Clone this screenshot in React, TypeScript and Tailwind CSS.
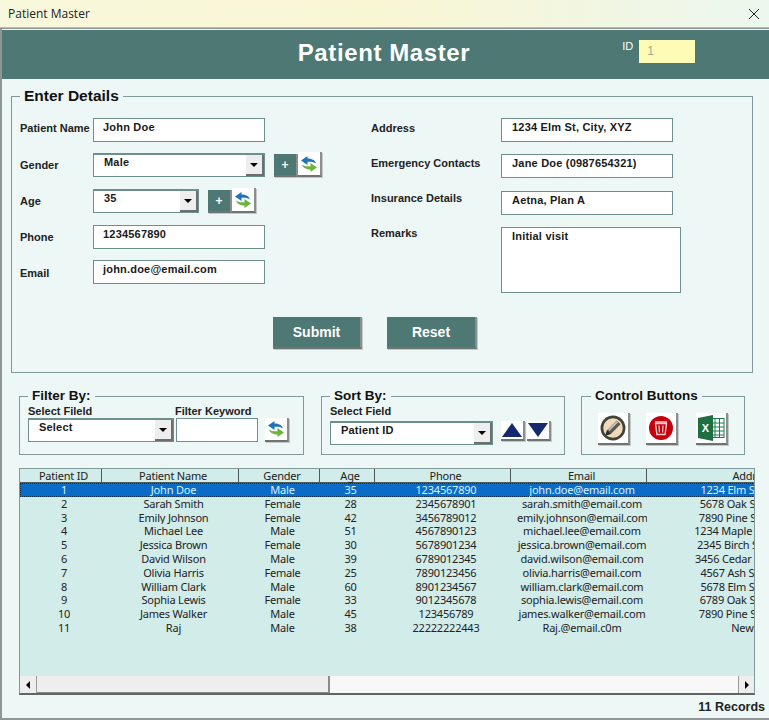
import React from "react";

const patients = [
  ["1", "John Doe", "Male", "35", "1234567890", "john.doe@email.com", "1234 Elm St, City, XYZ"],
  ["2", "Sarah Smith", "Female", "28", "2345678901", "sarah.smith@email.com", "5678 Oak St, City, XYZ"],
  ["3", "Emily Johnson", "Female", "42", "3456789012", "emily.johnson@email.com", "7890 Pine St, City, XYZ"],
  ["4", "Michael Lee", "Male", "51", "4567890123", "michael.lee@email.com", "1234 Maple St, City, XYZ"],
  ["5", "Jessica Brown", "Female", "30", "5678901234", "jessica.brown@email.com", "2345 Birch St, City, XYZ"],
  ["6", "David Wilson", "Male", "39", "6789012345", "david.wilson@email.com", "3456 Cedar St, City, XYZ"],
  ["7", "Olivia Harris", "Female", "25", "7890123456", "olivia.harris@email.com", "4567 Ash St, City, XYZ"],
  ["8", "William Clark", "Male", "60", "8901234567", "william.clark@email.com", "5678 Elm St, City, XYZ"],
  ["9", "Sophia Lewis", "Female", "33", "9012345678", "sophia.lewis@email.com", "6789 Oak St, City, XYZ"],
  ["10", "James Walker", "Male", "45", "123456789", "james.walker@email.com", "7890 Pine St, City, XYZ"],
  ["11", "Raj", "Male", "38", "22222222443", "Raj.@email.c0m", "New City"],
];

const columns = [
  { name: "Patient ID", width: "w-[82px]" },
  { name: "Patient Name", width: "w-[137px]" },
  { name: "Gender", width: "w-[81px]" },
  { name: "Age", width: "w-[55px]" },
  { name: "Phone", width: "w-[136px]" },
  { name: "Email", width: "w-[136px]" },
  { name: "Address", width: "w-[206px]" },
];

function RefreshIcon() {
  return (
    <svg width="18" height="18" viewBox="0 0 18 18">
      <path d="M1 5.5 7.5 1v2.6c4 0 7.5 1.4 8.5 5-2-1.6-4.6-2-8.5-1.8V10z" fill="#1d74b8" />
      <path d="M17 12.5 10.5 17v-2.6c-4 0-7.5-1.4-8.5-5 2 1.6 4.6 2 8.5 1.8V8z" fill="#6cb33f" />
    </svg>
  );
}

function EditIcon() {
  return (
    <svg width="26" height="26" viewBox="0 0 24 24">
      <circle cx="12" cy="12" r="11.5" fill="#3f4436" />
      <circle cx="12" cy="12" r="9" fill="#f2d9bd" />
      <path d="M5 19l1.5-5L15.5 5l3.5 3.5-9 9z" fill="#5a5a52" />
      <path d="M7.5 13.5 15.5 5.5l1.2 1.2-8 8z" fill="#c9c9c0" />
      <path d="M5 19l1.5-5 3.5 3.5z" fill="#2d2d28" />
    </svg>
  );
}

function TrashIcon() {
  return (
    <svg width="24" height="24" viewBox="0 0 24 24">
      <circle cx="12" cy="12" r="12" fill="#c4000f" />
      <path d="M6.5 7.5h11l-1.4 11H7.9z" fill="none" stroke="#f3c9c9" strokeWidth="1.4" />
      <path d="M6 6h12" stroke="#f3c9c9" strokeWidth="1.6" />
      <path d="M10 9.5l.4 7M14 9.5l-.4 7" stroke="#f3c9c9" strokeWidth="1.2" />
    </svg>
  );
}

function ExcelIcon() {
  return (
    <svg width="28" height="26" viewBox="0 0 28 26">
      <rect x="13" y="3.5" width="14" height="19" fill="#fff" stroke="#1f7a4a" />
      <path d="M18 4v18M22.5 4v18M13 8h14M13 12h14M13 16h14M13 20h14" stroke="#1f7a4a" strokeWidth="1" />
      <path d="M1 3 16 0v26L1 23z" fill="#1d6f42" />
      <text x="8.5" y="17" textAnchor="middle" fontSize="11" fontWeight="700" fill="#fff" fontFamily="Liberation Sans">X</text>
    </svg>
  );
}

function RaisedButton({ className, children }: { className: string; children: React.ReactNode }) {
  return (
    <button className={`flex items-center justify-center border-r-2 border-b-2 border-r-[#8a8f8e] border-b-[#6f7473] shadow-[1px_1px_0_#c4c9c8] ${className}`}>
      {children}
    </button>
  );
}

function TextBox({ value, className = "w-[172px] h-6 pl-[9px]" }: { value: string; className?: string }) {
  return (
    <div className={`bg-white border border-[#6f8f8c] pt-[1px] text-[11px] font-bold text-[#1a1a1a] leading-[14px] tracking-[0.2px] ${className}`}>
      {value}
    </div>
  );
}

function ComboBox({ value, className }: { value: string; className: string }) {
  return (
    <div className={`flex bg-white border border-[#6f8f8c] border-t-2 text-[11px] font-bold text-[#1a1a1a] leading-[14px] ${className}`}>
      <span className="flex-1 pl-[10px] tracking-[0.2px]">{value}</span>
      <span className="w-[18px] flex items-center justify-center bg-[#eeeeee] border-r-2 border-b-2 border-[#6b6f6e]">
        <span className="w-0 h-0 border-x-[4px] border-x-transparent border-t-[4px] border-t-black" />
      </span>
    </div>
  );
}

function AddButtons() {
  return (
    <div className="flex">
      <RaisedButton className="w-6 h-[23px] bg-[#4d7874] text-white font-bold text-[12px]">+</RaisedButton>
      <RaisedButton className="w-6 h-[25px] bg-white -mt-[2px]">
        <RefreshIcon />
      </RaisedButton>
    </div>
  );
}

function Label({ children, className = "" }: { children: React.ReactNode; className?: string }) {
  return <div className={`text-[11px] font-bold text-[#222] leading-[14px] whitespace-nowrap ${className}`}>{children}</div>;
}

function Group({ title, className, legend, children }: { title: string; className: string; legend: string; children: React.ReactNode }) {
  return (
    <fieldset className={`border border-[#7f9a98] ${className}`}>
      <legend className={`px-[4px] font-bold text-[#111] leading-[14px] ${legend}`}>{title}</legend>
      {children}
    </fieldset>
  );
}

function PatientGrid() {
  return (
    <div className="w-[736px] ml-[17px] mt-[13px] h-[227px] flex flex-col border border-[#7f9a98] border-b-2 border-b-[#5f6665] bg-[#d2ecea] overflow-hidden font-['Noto_Sans',sans-serif] text-[11px] tracking-[-0.2px]">
      <div className="flex-1 overflow-hidden">
        <div className="w-[847px]">
          <div className="flex h-[14px] border-b border-[#4a5a58]">
            {columns.map((c) => (
              <div key={c.name} className={`${c.width} shrink-0 text-center pl-[6px] leading-[14px] text-[#222] border-r border-[#4a5a58]`}>
                {c.name}
              </div>
            ))}
          </div>
          {patients.map((p, i) => (
            <div key={p[0]} className={`flex h-[13.8px] ${i === 0 ? "bg-[#0a6cc6] text-[#d9f2ff] outline-1 -outline-offset-1 outline-dotted outline-[#0b2f55]" : "text-[#222]"}`}>
              {p.map((v, j) => (
                <div key={j} className={`${columns[j].width} shrink-0 overflow-hidden whitespace-nowrap text-center pl-[6px] leading-[14px]`}>
                  {v}
                </div>
              ))}
            </div>
          ))}
        </div>
      </div>
      <div className="flex h-[17px] bg-[#f8f8f8]">
        <div className="w-[17px] flex items-center justify-center bg-[#eeeeee] border-r border-[#9a9a9a]">
          <span className="w-0 h-0 border-y-[4px] border-y-transparent border-r-[4px] border-r-black" />
        </div>
        <div className="w-[293px] bg-[#eeeeee] border-r-2 border-b border-[#8a8a8a]" />
        <div className="flex-1" />
        <div className="w-[16px] flex items-center justify-center bg-[#eeeeee] border-l border-[#9a9a9a]">
          <span className="w-0 h-0 border-y-[4px] border-y-transparent border-l-[4px] border-l-black" />
        </div>
      </div>
    </div>
  );
}

export default function App() {
  return (
    <div className="w-[769px] h-[720px] overflow-hidden flex flex-col font-['Liberation_Sans',sans-serif] bg-[#ecf7f6]">
      {/* title bar */}
      <div className="h-[28px] flex items-center justify-between pl-[8px] pr-[9px] bg-gradient-to-r from-[#f8f8dc] via-[#f9f6d4] to-[#ecf7ee] border-b border-[#b9b9ad]">
        <span className="text-[12px] text-[#222] font-['Open_Sans',sans-serif]">Patient Master</span>
        <svg width="12" height="12" viewBox="0 0 12 12">
          <path d="M1 1l10 10M11 1 1 11" stroke="#222" strokeWidth="1" />
        </svg>
      </div>

      <div className="flex-1 flex flex-col border-l-2 border-b-2 border-t border-[#8f9695]">
        {/* header */}
        <div className="h-[49px] mt-[1px] grid grid-cols-[1fr_auto_1fr] bg-[#4d7874] text-white items-center">
          <div />
          <div className="text-[24px] font-bold tracking-[0.6px] -mt-[4px] -ml-[3px]">Patient Master</div>
          <div className="flex items-start ml-[152px] -mt-[7px]">
            <span className="text-[11px] mr-[6px] leading-[12px]">ID</span>
            <span className="w-[56px] h-[23px] bg-[#fdfbb6] text-[#a8a890] text-[12px] pl-[8px] pt-[2px]">1</span>
          </div>
        </div>

        {/* form */}
        <Group title="Enter Details" legend="ml-[8px] text-[15.5px]" className="w-[742px] ml-[9px] mt-[10px] h-[284px]">
          <div className="flex pt-[15px]">
            <div className="w-[359px] pl-[8px] flex flex-col">
              <div className="flex items-start">
                <Label className="w-[73px] mt-[3px]">Patient Name</Label>
                <TextBox value="John Doe" />
              </div>
              <div className="flex items-start mt-[11px]">
                <Label className="w-[73px] mt-[5px]">Gender</Label>
                <ComboBox value="Male" className="w-[172px] h-6" />
                <div className="ml-[9px] mt-[1px]"><AddButtons /></div>
              </div>
              <div className="flex items-start mt-[12px]">
                <Label className="w-[73px] mt-[5px]">Age</Label>
                <ComboBox value="35" className="w-[106px] h-6" />
                <div className="ml-[9px] mt-[1px]"><AddButtons /></div>
              </div>
              <div className="flex items-start mt-[12px]">
                <Label className="w-[73px] mt-[5px]">Phone</Label>
                <TextBox value="1234567890" />
              </div>
              <div className="flex items-start mt-[11px]">
                <Label className="w-[73px] mt-[6px]">Email</Label>
                <TextBox value="john.doe@email.com" />
              </div>
            </div>
            <div className="flex flex-col">
              <div className="flex items-start">
                <Label className="w-[130px] mt-[3px]">Address</Label>
                <TextBox value="1234 Elm St, City, XYZ" className="w-[172px] h-6 pl-[10px]" />
              </div>
              <div className="flex items-start mt-[12px]">
                <Label className="w-[130px] mt-[2px]">Emergency Contacts</Label>
                <TextBox value="Jane Doe (0987654321)" className="w-[172px] h-6 pl-[10px]" />
              </div>
              <div className="flex items-start mt-[13px]">
                <Label className="w-[130px]">Insurance Details</Label>
                <TextBox value="Aetna, Plan A" className="w-[172px] h-6 pl-[10px]" />
              </div>
              <div className="flex items-start mt-[12px]">
                <Label className="w-[130px] -mt-[1px]">Remarks</Label>
                <TextBox value="Initial visit" className="w-[180px] h-[66px] pl-[10px]" />
              </div>
            </div>
          </div>
          <div className="flex gap-[25px] mt-[24px] pl-[261px]">
            <RaisedButton className="w-[89px] h-8 bg-[#4d7874] text-white font-bold text-[14px]">Submit</RaisedButton>
            <RaisedButton className="w-[90px] h-8 bg-[#4d7874] text-white font-bold text-[14px]">Reset</RaisedButton>
          </div>
        </Group>

        {/* filter, sort, controls */}
        <div className="flex items-start mt-[16px] ml-[17px]">
          <Group title="Filter By:" legend="text-[13.5px]" className="w-[285px] h-[66px] pl-[8px]">
            <div className="flex font-bold text-[11px] leading-[12px] text-[#222] mt-[2px]">
              <span className="w-[147px]">Select Fileld</span>
              <span>Filter Keyword</span>
            </div>
            <div className="flex items-start mt-[1px]">
              <ComboBox value="Select" className="w-[146px] h-6" />
              <div className="ml-[2px] w-[82px] h-6 bg-white border border-[#6f8f8c]" />
              <RaisedButton className="ml-[7px] w-[24px] h-6 bg-white"><RefreshIcon /></RaisedButton>
            </div>
          </Group>
          <Group title="Sort By:" legend="text-[13.5px]" className="w-[244px] h-[66px] ml-[17px] pl-[8px]">
            <div className="font-bold text-[11px] leading-[12px] text-[#222] mt-[2px]">Select Field</div>
            <div className="flex items-start mt-[4px]">
              <ComboBox value="Patient ID" className="w-[163px] h-6" />
              <RaisedButton className="ml-[8px] w-6 h-[20px] bg-white">
                <span className="w-0 h-0 border-x-[10px] border-x-transparent border-b-[14px] border-b-[#14296e]" />
              </RaisedButton>
              <RaisedButton className="ml-[2px] w-6 h-[20px] bg-white">
                <span className="w-0 h-0 border-x-[10px] border-x-transparent border-t-[14px] border-t-[#14296e]" />
              </RaisedButton>
            </div>
          </Group>
          <Group title="Control Buttons" legend="ml-[9px] text-[13.5px]" className="w-[164px] h-[66px] ml-[16px]">
            <div className="flex pl-[16px] gap-[16px] mt-[10px]">
              <RaisedButton className="w-[32px] h-[32px] bg-white"><EditIcon /></RaisedButton>
              <RaisedButton className="w-[32px] h-[32px] bg-white"><TrashIcon /></RaisedButton>
              <RaisedButton className="w-[32px] h-[32px] bg-white ml-[2px]"><ExcelIcon /></RaisedButton>
            </div>
          </Group>
        </div>

        <PatientGrid />

        <div className="text-right pr-[4px] mt-[3px] text-[12.5px] font-bold text-[#222]">11 Records</div>
      </div>
    </div>
  );
}
